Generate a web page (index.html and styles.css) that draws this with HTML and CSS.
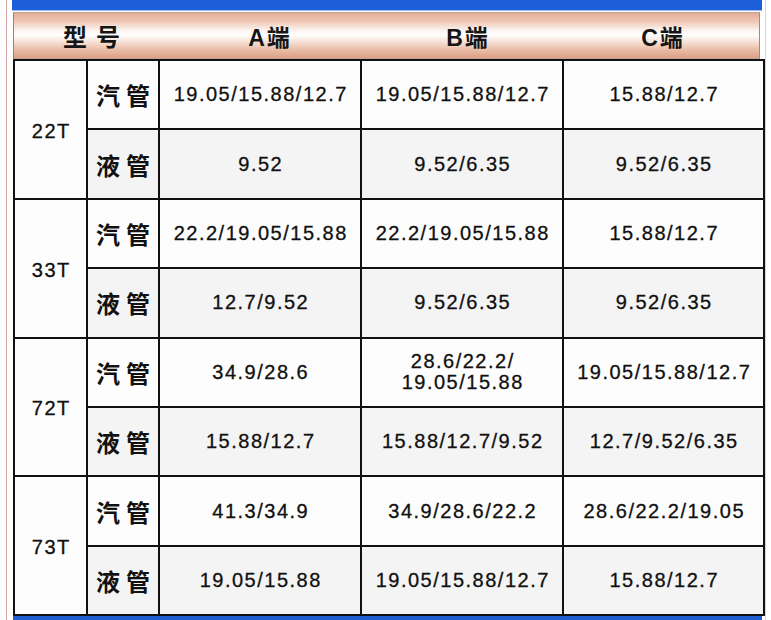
FILE: index.html
```html
<!DOCTYPE html>
<html lang="zh">
<head>
<meta charset="utf-8">
<title>型号配管表</title>
<link rel="stylesheet" href="styles.css">
</head>
<body>
<div class="frame">
  <div class="bar-top"></div>
  <div class="header">
    <div class="h-cell h-model">型号</div>
    <div class="h-cell">A端</div>
    <div class="h-cell">B端</div>
    <div class="h-cell">C端</div>
  </div>
  <table class="spec">
    <colgroup>
      <col class="c-model"><col class="c-type"><col class="c-a"><col class="c-b"><col class="c-c">
    </colgroup>
    <tbody>
      <tr class="gas">
        <td class="model" rowspan="2">22T</td>
        <td class="type">汽管</td>
        <td>19.05/15.88/12.7</td>
        <td>19.05/15.88/12.7</td>
        <td>15.88/12.7</td>
      </tr>
      <tr class="liquid">
        <td class="type">液管</td>
        <td>9.52</td>
        <td>9.52/6.35</td>
        <td>9.52/6.35</td>
      </tr>
      <tr class="gas">
        <td class="model" rowspan="2">33T</td>
        <td class="type">汽管</td>
        <td>22.2/19.05/15.88</td>
        <td>22.2/19.05/15.88</td>
        <td>15.88/12.7</td>
      </tr>
      <tr class="liquid">
        <td class="type">液管</td>
        <td>12.7/9.52</td>
        <td>9.52/6.35</td>
        <td>9.52/6.35</td>
      </tr>
      <tr class="gas">
        <td class="model" rowspan="2">72T</td>
        <td class="type">汽管</td>
        <td>34.9/28.6</td>
        <td class="two">28.6/22.2/<br>19.05/15.88</td>
        <td>19.05/15.88/12.7</td>
      </tr>
      <tr class="liquid">
        <td class="type">液管</td>
        <td>15.88/12.7</td>
        <td>15.88/12.7/9.52</td>
        <td>12.7/9.52/6.35</td>
      </tr>
      <tr class="gas">
        <td class="model" rowspan="2">73T</td>
        <td class="type">汽管</td>
        <td>41.3/34.9</td>
        <td>34.9/28.6/22.2</td>
        <td>28.6/22.2/19.05</td>
      </tr>
      <tr class="liquid">
        <td class="type">液管</td>
        <td>19.05/15.88</td>
        <td>19.05/15.88/12.7</td>
        <td>15.88/12.7</td>
      </tr>
    </tbody>
  </table>
  <div class="bar-bottom"></div>
</div>
</body>
</html>
```

FILE: styles.css
```css
html, body {
  margin: 0;
  padding: 0;
  background: #ffffff;
  overflow: hidden;
}

body {
  height: 620px;
  font-family: "Liberation Sans", Arial, "Noto Sans CJK SC", sans-serif;
  color: #141414;
}

.frame {
  margin-left: 6px;
  width: 750px;
  height: 620px;
  padding: 0 3px 0 5px;
  border-left: 1px solid #d4a3a3;
  border-right: 1px solid #d6d6d6;
  display: flex;
  flex-direction: column;
}

.bar-top {
  height: 10px;
  background: #1c5fd9;
  border-bottom: 1px solid #9fbbe8;
  margin-bottom: 1px;
  flex: none;
}

.header {
  flex: none;
  height: 45px;
  margin: 0 2px 0 1px;
  display: grid;
  grid-template-columns: 155px 200px 196px 1fr;
  align-items: center;
  border: 1px solid #b9a59a;
  border-left-color: #8d8580;
  border-right-color: #a88a7c;
  background: linear-gradient(to bottom,
    #e3ae96 0%,
    #eec6b3 18%,
    #fbefe9 36%,
    #ffffff 48%,
    #f8e6dc 62%,
    #ebbfa9 80%,
    #dd9f86 100%);
  font-family: "Liberation Sans", Arial, "Noto Sans CJK SC", sans-serif;
  font-weight: 700;
  font-size: 23px;
  color: #151515;
}

.h-cell {
  text-align: center;
  letter-spacing: 2px;
  padding-left: 2px;
}

.h-model {
  font-size: 24px;
  letter-spacing: 9px;
  padding-left: 9px;
}

.spec {
  flex: none;
  width: 750px;
  margin-left: 1px;
  border-collapse: collapse;
  border: 2px solid #111111;
  table-layout: fixed;
}

.c-model { width: 73px; }
.c-type { width: 72px; }
.c-a { width: 202px; }
.c-b { width: 202px; }
.c-c { width: 201px; }

.spec td {
  border: 2px solid #111111;
  height: 67.4px;
  padding: 0;
  text-align: center;
  vertical-align: middle;
  font-size: 20px;
  letter-spacing: 1.5px;
  padding-left: 1.5px;
  white-space: nowrap;
  color: #101010;
  -webkit-text-stroke: 0.3px #101010;
}

.spec tr.gas td {
  background: #fdfdfd;
}

.spec tr.liquid td {
  background: #f4f4f4;
}

.spec td.model {
  background: #f8f8f8;
  padding-top: 4px;
}

.spec td.type {
  font-family: "Noto Sans CJK SC", "Liberation Sans", sans-serif;
  font-weight: 700;
  font-size: 24px;
  letter-spacing: 6px;
  padding-left: 6px;
  color: #111111;
  -webkit-text-stroke: 0;
}

.spec td.two {
  line-height: 21px;
  padding-top: 0;
}

.bar-bottom {
  flex: none;
  height: 8px;
  margin-left: 1px;
  background: #1f5cd0;
}
```
